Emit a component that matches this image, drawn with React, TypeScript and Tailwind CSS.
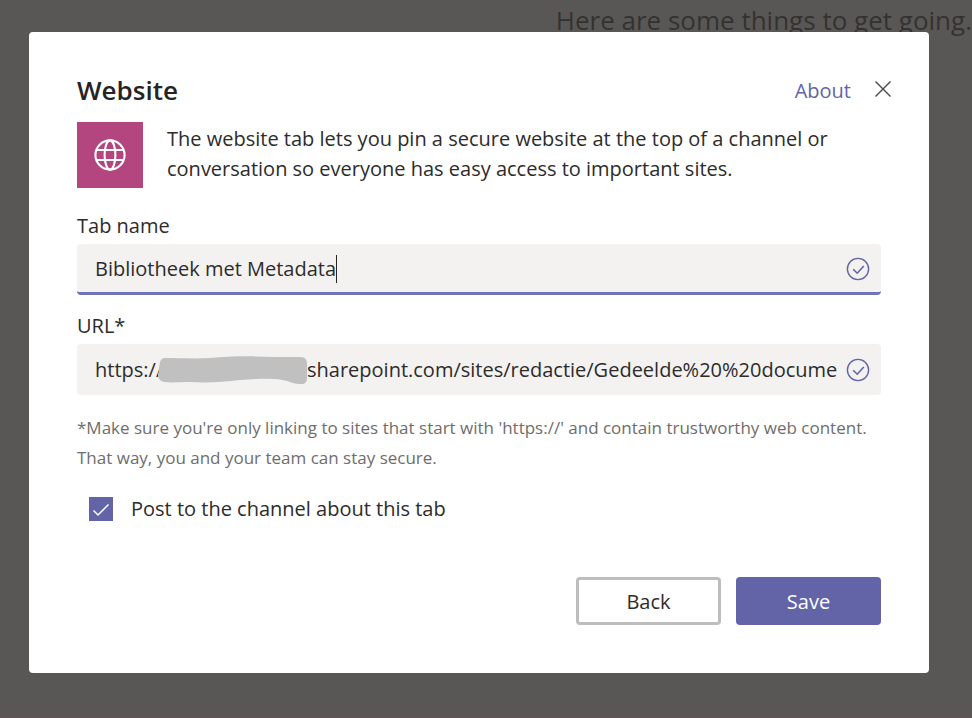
import React, { useState } from 'react';

function GlobeIcon() {
  return (
    <svg className="size-8" viewBox="0 0 32 32" fill="none" stroke="currentColor" strokeWidth="2.1" aria-hidden="true">
      <circle cx="16" cy="16" r="14.6" />
      <ellipse cx="16" cy="16" rx="5.4" ry="14.6" />
      <path d="M2.4 11h27.2M2.4 21h27.2" />
    </svg>
  );
}

function ValidIcon() {
  return (
    <svg className="size-6 shrink-0 text-[#6264a7]" viewBox="0 0 24 24" fill="none" stroke="currentColor" aria-hidden="true">
      <circle cx="12" cy="12" r="10.6" strokeWidth="1.4" />
      <path d="M7.2 12.2l4 4 6.6-7.2" strokeWidth="1.6" />
    </svg>
  );
}

function HiddenTenant() {
  return (
    <svg className="h-7 w-[149px] shrink-0" viewBox="0 0 149 28" fill="#c0c0c0" aria-hidden="true">
      <path d="M6 2C22 2 38 3 52 2C72 0 96 0 116 1C128 1 136 1 143 1C147 1 149 4 149 8V22C149 27 146 29 141 28C135 28 132 25 124 24C112 22 98 23 82 24C66 26 48 27 32 26C22 26 14 27 6 26C2 25 0 23 0 18C2 14 0 3 6 2Z" />
    </svg>
  );
}

export default function App() {
  const [tabName, setTabName] = useState('Bibliotheek met Metadata');
  const [url, setUrl] = useState('sharepoint.com/sites/redactie/Gedeelde%20%20documenten');
  const [post, setPost] = useState(true);

  return (
    <div className="relative min-h-screen overflow-hidden border-b-2 border-[#5f5557] bg-[#595755] font-['Open_Sans','Noto_Sans',sans-serif] text-xl text-[#2d2c2b]">
      <p className="absolute top-0 right-0 text-[26px] leading-10 whitespace-nowrap text-[#343231]">
        Here are some things to get going.
      </p>

      <div className="relative pt-8 pr-[43px] pb-10 pl-[29px]">
        <div role="dialog" aria-labelledby="dialog-title" className="rounded bg-white px-12 pt-10 pb-12">
          <header className="-mr-3 flex h-9 items-center">
            <h1 id="dialog-title" className="text-[26px] font-semibold text-[#252423]">Website</h1>
            <a href="#about" className="ml-auto pt-0.5 text-[#6264a7]">About</a>
            <button type="button" aria-label="Close" className="ml-[22px] flex size-5 items-center justify-center text-[#484644]">
              <svg className="size-5" viewBox="0 0 20 20" fill="none" stroke="currentColor" strokeWidth="1.4" aria-hidden="true">
                <path d="M2.5 1.5l15 15M17.5 1.5l-15 15" />
              </svg>
            </button>
          </header>

          <div className="mt-3.5 flex gap-6">
            <div className="flex size-[66px] shrink-0 items-center justify-center bg-[#b4467f] text-white">
              <GlobeIcon />
            </div>
            <p className="pt-0.5 leading-[30px]">
              The website tab lets you pin a secure website at the top of a channel or conversation so everyone has easy
              access to important sites.
            </p>
          </div>

          <form onSubmit={(e) => e.preventDefault()}>
            <label htmlFor="tab-name" className="mt-[23px] block leading-[30px]">Tab name</label>
            <div className="mt-[3px] flex h-[51px] items-center rounded border-b-3 border-[#7174b4] bg-[#f3f2f1] pt-0.5 pr-[11px] pl-[18px]">
              <input
                id="tab-name"
                type="text"
                value={tabName}
                onChange={(e) => setTabName(e.target.value)}
                className="field-sizing-content min-w-0 caret-transparent outline-none"
              />
              <span className="mr-auto h-7 w-px bg-[#252423]" />
              <ValidIcon />
            </div>

            <label htmlFor="url" className="mt-4 block leading-[30px]">URL*</label>
            <div className="mt-[3px] flex h-[51px] items-center rounded bg-[#f3f2f1] pr-[11px] pl-[18px]">
              <span className="w-[63px] shrink-0">https://</span>
              <HiddenTenant />
              <input
                id="url"
                type="text"
                value={url}
                onChange={(e) => setUrl(e.target.value)}
                className="mr-[9px] min-w-0 flex-1 outline-none"
              />
              <ValidIcon />
            </div>

            <p className="mt-[18px] text-[17px] leading-[30px] text-[#6f6d6b]">
              *Make sure you're only linking to sites that start with 'https://' and contain trustworthy web content.
              That way, you and your team can stay secure.
            </p>

            <div className="mt-[21px] ml-3 flex items-center leading-[30px]">
              <span className="relative flex size-6">
                <input
                  id="post"
                  type="checkbox"
                  checked={post}
                  onChange={(e) => setPost(e.target.checked)}
                  className="peer size-6 appearance-none border border-[#6264a7] checked:bg-[#6264a7]"
                />
                <svg
                  className="pointer-events-none absolute inset-0 hidden size-6 text-white peer-checked:block"
                  viewBox="0 0 24 24"
                  fill="none"
                  stroke="currentColor"
                  strokeWidth="1.5"
                  aria-hidden="true"
                >
                  <path d="M4.5 13.5l4.5 4.5L19.5 7.5" />
                </svg>
              </span>
              <label htmlFor="post" className="pl-[18px]">Post to the channel about this tab</label>
            </div>

            <div className="mt-[53px] flex justify-end gap-[15px]">
              <button type="button" className="h-12 w-[145px] rounded border-3 border-[#bdbdbd] bg-white pt-0.5">Back</button>
              <button type="submit" className="h-12 w-[145px] rounded bg-[#6264a7] pt-0.5 text-white">Save</button>
            </div>
          </form>
        </div>
      </div>
    </div>
  );
}
